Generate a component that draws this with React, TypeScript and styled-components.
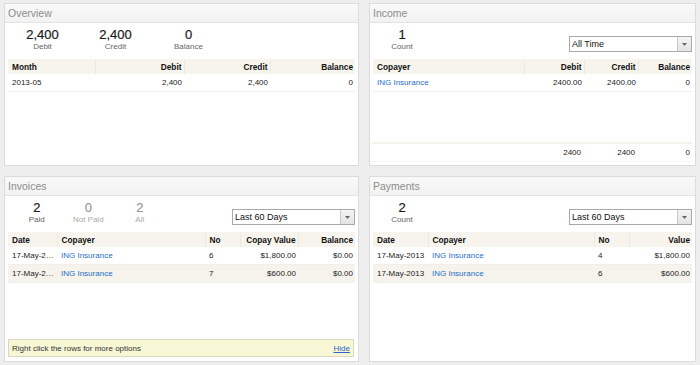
import React, { ReactElement } from 'react';
import styled, { createGlobalStyle } from 'styled-components';

const GlobalStyle = createGlobalStyle`
	html, body {
		margin: 0;
		padding: 0;
		background: #eeeeee;
		font-family: 'Liberation Sans', Arial, sans-serif;
	}
`;

const Page = styled.div`
	display: grid;
	grid-template-columns: 355px 327px;
	grid-template-rows: 163px 186px;
	gap: 10px;
	padding: 3px 4px;
`;

const Panel = styled.section`
	display: flex;
	flex-direction: column;
	box-sizing: border-box;
	background: #ffffff;
	border: 1px solid #dcdcdc;
	overflow: hidden;
`;

const PanelHeader = styled.div`
	height: 18px;
	line-height: 18px;
	padding-left: 3px;
	background: linear-gradient(#f9f9f9, #f2f2f2);
	border-bottom: 1px solid #e3e3e3;
	color: #8c8c8c;
	font-size: 10.5px;
`;

const TopRow = styled.div`
	display: flex;
	align-items: flex-end;
	justify-content: space-between;
	padding: 4px 3px 0 0;
	margin-bottom: 7px;
`;

const Stats = styled.div<{ $indent: number }>`
	display: flex;
	padding-left: ${(p) => p.$indent}px;
`;

const Stat = styled.div<{ $width: number; $muted?: boolean }>`
	width: ${(p) => p.$width}px;
	text-align: center;

	strong {
		display: block;
		font-weight: normal;
		font-size: 13px;
		line-height: 15px;
		color: ${(p) => (p.$muted ? '#9a9a9a' : '#1a1a1a')};
		-webkit-text-stroke: 0.2px ${(p) => (p.$muted ? '#9a9a9a' : '#1a1a1a')};
	}

	span {
		display: block;
		font-size: 8px;
		line-height: 10px;
		color: ${(p) => (p.$muted ? '#a8a8a8' : '#666666')};
	}
`;

const Select = styled.div`
	display: flex;
	width: 123px;
	height: 16px;
	box-sizing: border-box;
	border: 1px solid #a9a9a9;
	background: #ffffff;
	font-size: 9px;
	color: #111;
`;

const SelectText = styled.div`
	flex: 1;
	line-height: 14px;
	padding-left: 2px;
`;

const SelectButton = styled.div`
	width: 13px;
	display: flex;
	align-items: center;
	justify-content: center;
	border-left: 1px solid #c8c8c8;
	background: linear-gradient(#f4f4f4, #e4e4e4);
`;

const TableWrap = styled.div`
	padding: 0 3px;
`;

const Table = styled.table`
	width: 100%;
	border-collapse: collapse;
	table-layout: fixed;
	font-size: 8px;
`;

const Col = styled.col<{ $w?: number }>`
	width: ${(p) => (p.$w ? `${p.$w}px` : 'auto')};
`;

const Th = styled.th<{ $right?: boolean }>`
	height: 15px;
	padding: 0 2px 0 4px;
	background: #f6f4ed;
	font-weight: bold;
	font-size: 8.3px;
	color: #111;
	text-align: ${(p) => (p.$right ? 'right' : 'left')};
	border-left: 1px solid #ece9df;

	&:first-child {
		border-left: none;
	}
`;

const Tr = styled.tr<{ $alt?: boolean }>`
	background: ${(p) => (p.$alt ? '#f5f3ec' : '#ffffff')};
`;

const Td = styled.td<{ $right?: boolean }>`
	height: 17px;
	padding: 0 2px 0 4px;
	color: #222;
	text-align: ${(p) => (p.$right ? 'right' : 'left')};
	border-bottom: 1px solid #f1efe9;
	white-space: nowrap;
	overflow: hidden;
	text-overflow: ellipsis;
`;

const Link = styled.a`
	color: #1f6fc6;
	text-decoration: none;
`;

const Totals = styled.div`
	display: grid;
	grid-template-columns: 151px 60px 54px 55px;
	margin: auto 3px 3px 2px;
	height: 17px;
	border-top: 2px solid #f4f2ea;
	border-bottom: 1px dotted #ececec;
	font-size: 8px;
	color: #222;
	line-height: 17px;

	div {
		text-align: right;
		padding-right: 2px;
	}
`;

const Hint = styled.div`
	display: flex;
	justify-content: space-between;
	align-items: center;
	height: 18px;
	box-sizing: border-box;
	margin: auto 4px 4px 3px;
	padding: 0 3px 0 3px;
	background: #f7f7d5;
	border: 1px solid #d7d7c2;
	font-size: 8px;
	color: #333;

	a {
		color: #2b66c9;
		text-decoration: underline;
	}
`;

function Dropdown({ value }: { value: string }): ReactElement {
	return (
		<Select>
			<SelectText>{value}</SelectText>
			<SelectButton>
				<svg width="5" height="3" viewBox="0 0 5 3">
					<path d="M0 0h5L2.5 3z" fill="#666" />
				</svg>
			</SelectButton>
		</Select>
	);
}

export default function App(): ReactElement {
	return (
		<>
			<GlobalStyle />
			<Page>
				<Panel>
					<PanelHeader>Overview</PanelHeader>
					<TopRow>
						<Stats $indent={1}>
							<Stat $width={73}>
								<strong>2,400</strong>
								<span>Debit</span>
							</Stat>
							<Stat $width={73}>
								<strong>2,400</strong>
								<span>Credit</span>
							</Stat>
							<Stat $width={73}>
								<strong>0</strong>
								<span>Balance</span>
							</Stat>
						</Stats>
					</TopRow>
					<TableWrap>
						<Table>
							<colgroup>
								<Col $w={87} />
								<Col $w={89} />
								<Col $w={86} />
								<Col />
							</colgroup>
							<thead>
								<tr>
									<Th>Month</Th>
									<Th $right>Debit</Th>
									<Th $right>Credit</Th>
									<Th $right>Balance</Th>
								</tr>
							</thead>
							<tbody>
								<Tr>
									<Td>2013-05</Td>
									<Td $right>2,400</Td>
									<Td $right>2,400</Td>
									<Td $right>0</Td>
								</Tr>
							</tbody>
						</Table>
					</TableWrap>
				</Panel>

				<Panel>
					<PanelHeader>Income</PanelHeader>
					<TopRow>
						<Stats $indent={2}>
							<Stat $width={60}>
								<strong>1</strong>
								<span>Count</span>
							</Stat>
						</Stats>
						<Dropdown value="All Time" />
					</TopRow>
					<TableWrap>
						<Table>
							<colgroup>
								<Col $w={151} />
								<Col $w={60} />
								<Col $w={54} />
								<Col />
							</colgroup>
							<thead>
								<tr>
									<Th>Copayer</Th>
									<Th $right>Debit</Th>
									<Th $right>Credit</Th>
									<Th $right>Balance</Th>
								</tr>
							</thead>
							<tbody>
								<Tr>
									<Td>
										<Link>ING Insurance</Link>
									</Td>
									<Td $right>2400.00</Td>
									<Td $right>2400.00</Td>
									<Td $right>0</Td>
								</Tr>
							</tbody>
						</Table>
					</TableWrap>
					<Totals>
						<span />
						<div>2400</div>
						<div>2400</div>
						<div>0</div>
					</Totals>
				</Panel>

				<Panel>
					<PanelHeader>Invoices</PanelHeader>
					<TopRow>
						<Stats $indent={6}>
							<Stat $width={51.5}>
								<strong>2</strong>
								<span>Paid</span>
							</Stat>
							<Stat $width={51.5} $muted>
								<strong>0</strong>
								<span>Not Paid</span>
							</Stat>
							<Stat $width={51.5} $muted>
								<strong>2</strong>
								<span>All</span>
							</Stat>
						</Stats>
						<Dropdown value="Last 60 Days" />
					</TopRow>
					<TableWrap>
						<Table>
							<colgroup>
								<Col $w={49} />
								<Col $w={148} />
								<Col $w={35} />
								<Col $w={58} />
								<Col />
							</colgroup>
							<thead>
								<tr>
									<Th>Date</Th>
									<Th>Copayer</Th>
									<Th>No</Th>
									<Th $right>Copay Value</Th>
									<Th $right>Balance</Th>
								</tr>
							</thead>
							<tbody>
								<Tr>
									<Td>17-May-2013</Td>
									<Td>
										<Link>ING Insurance</Link>
									</Td>
									<Td>6</Td>
									<Td $right>$1,800.00</Td>
									<Td $right>$0.00</Td>
								</Tr>
								<Tr $alt>
									<Td>17-May-2013</Td>
									<Td>
										<Link>ING Insurance</Link>
									</Td>
									<Td>7</Td>
									<Td $right>$600.00</Td>
									<Td $right>$0.00</Td>
								</Tr>
							</tbody>
						</Table>
					</TableWrap>
					<Hint>
						<span>Right click the rows for more options</span>
						<a>Hide</a>
					</Hint>
				</Panel>

				<Panel>
					<PanelHeader>Payments</PanelHeader>
					<TopRow>
						<Stats $indent={2}>
							<Stat $width={60}>
								<strong>2</strong>
								<span>Count</span>
							</Stat>
						</Stats>
						<Dropdown value="Last 60 Days" />
					</TopRow>
					<TableWrap>
						<Table>
							<colgroup>
								<Col $w={55} />
								<Col $w={166} />
								<Col $w={35} />
								<Col />
							</colgroup>
							<thead>
								<tr>
									<Th>Date</Th>
									<Th>Copayer</Th>
									<Th>No</Th>
									<Th $right>Value</Th>
								</tr>
							</thead>
							<tbody>
								<Tr>
									<Td>17-May-2013</Td>
									<Td>
										<Link>ING Insurance</Link>
									</Td>
									<Td>4</Td>
									<Td $right>$1,800.00</Td>
								</Tr>
								<Tr $alt>
									<Td>17-May-2013</Td>
									<Td>
										<Link>ING Insurance</Link>
									</Td>
									<Td>6</Td>
									<Td $right>$600.00</Td>
								</Tr>
							</tbody>
						</Table>
					</TableWrap>
				</Panel>
			</Page>
		</>
	);
}
